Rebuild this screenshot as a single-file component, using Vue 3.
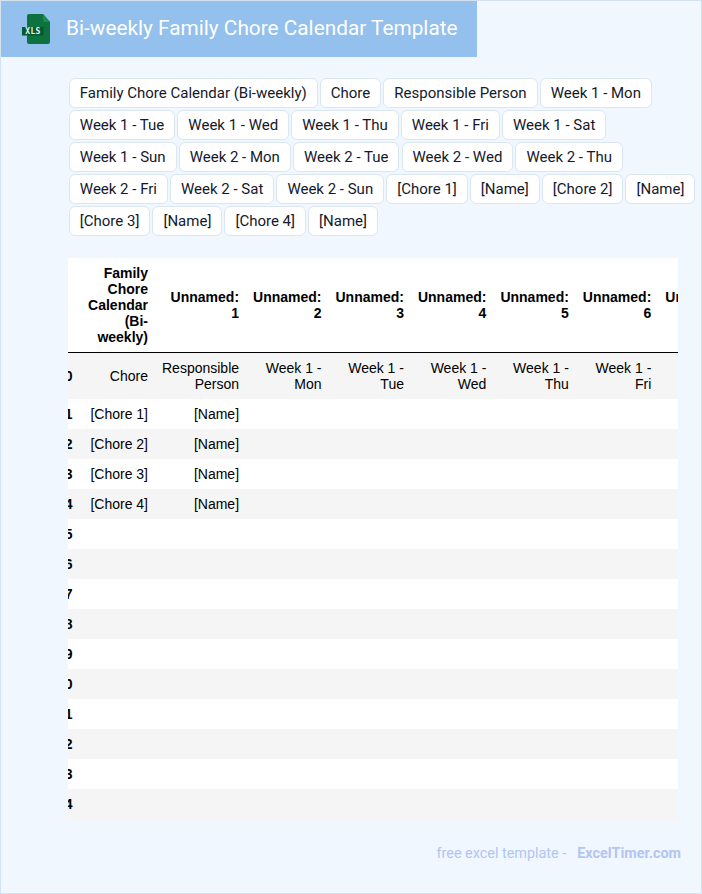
<script setup>
const chips = ['Family Chore Calendar (Bi-weekly)','Chore','Responsible Person','Week 1 - Mon','Week 1 - Tue','Week 1 - Wed','Week 1 - Thu','Week 1 - Fri','Week 1 - Sat','Week 1 - Sun','Week 2 - Mon','Week 2 - Tue','Week 2 - Wed','Week 2 - Thu','Week 2 - Fri','Week 2 - Sat','Week 2 - Sun','[Chore 1]','[Name]','[Chore 2]','[Name]','[Chore 3]','[Name]','[Chore 4]','[Name]']
const days = ['Mon','Tue','Wed','Thu','Fri','Sat','Sun']
const weeks = [...days.map(d => 'Week 1 - ' + d), ...days.map(d => 'Week 2 - ' + d)]
const heads = ['Family Chore Calendar (Bi-weekly)', ...Array.from({ length: 15 }, (_, i) => 'Unnamed: ' + (i + 1))]
const rows = [['Chore', 'Responsible Person', ...weeks]]
for (let i = 1; i <= 4; i++) rows.push(['[Chore ' + i + ']', '[Name]', ...weeks.map(() => '')])
for (let i = 5; i <= 14; i++) rows.push(heads.map(() => ''))
</script>

<template>
  <div class="page">
    <header class="banner">
      <svg class="logo" width="29" height="32" viewBox="0 0 29 32">
        <path d="M7 1h14l7 8v20a2 2 0 0 1-2 2H7a2 2 0 0 1-2-2V3a2 2 0 0 1 2-2z" fill="#0b7240" />
        <path d="M21 1l7 8h-5a2 2 0 0 1-2-2z" fill="#1d8a55" />
        <rect x="0" y="14" width="21.5" height="8.5" fill="#07592f" />
        <text x="11" y="21" text-anchor="middle" class="logo-text">XLS</text>
      </svg>
      <h1 class="title">Bi-weekly Family Chore Calendar Template</h1>
    </header>

    <div class="chips">
      <span v-for="(c, i) in chips" :key="i" class="chip">{{ c }}</span>
    </div>

    <div class="table-wrap">
      <table class="sheet">
        <thead>
          <tr>
            <th class="idx"></th>
            <th v-for="h in heads" :key="h">{{ h }}</th>
          </tr>
        </thead>
        <tbody>
          <tr v-for="(r, i) in rows" :key="i">
            <th class="idx">{{ i }}</th>
            <td v-for="(c, j) in r" :key="j">{{ c }}</td>
          </tr>
        </tbody>
      </table>
    </div>

    <footer class="foot">
      <span>free excel template -</span>
      <strong>ExcelTimer.com</strong>
    </footer>
  </div>
</template>

<style>
html, body { margin: 0; padding: 0; }
</style>

<style scoped>
.page {
  box-sizing: border-box;
  width: 702px;
  height: 894px;
  background: #f0f7ff;
  border: 1px solid #d5e2f0;
  overflow: hidden;
  font-family: Roboto, sans-serif;
  display: flex;
  flex-direction: column;
}
.banner {
  width: 476px;
  height: 56px;
  background: #93c0ec;
  display: flex;
  align-items: center;
  flex-shrink: 0;
}
.logo { margin-left: 21px; margin-right: 15px; flex-shrink: 0; }
.logo-text { font: bold 8px "DejaVu Sans Mono", monospace; letter-spacing: 0.4px; fill: #e8f5ee; }
.title {
  margin: 0 0 2px;
  font-size: 20.8px;
  font-weight: 400;
  color: #fff;
  white-space: nowrap;
}
.chips {
  margin: 21px 4px 0 67.8px;
  display: flex;
  flex-wrap: wrap;
  gap: 2px 2.05px;
}
.chip {
  box-sizing: border-box;
  height: 30px;
  line-height: 28px;
  padding: 0 10px;
  background: #fff;
  border: 1px solid #dbe6f3;
  border-radius: 6px;
  font-size: 15px;
  color: #14192b;
  white-space: nowrap;
}
.table-wrap {
  margin: 22px 23px 0 67px;
  overflow: hidden;
  background: #fff;
}
.sheet {
  border-collapse: collapse;
  margin-left: -18px;
  font: 14px/16px "Liberation Sans", Arial, sans-serif;
  color: #000;
}
.sheet th, .sheet td {
  padding: 7px;
  text-align: right;
  vertical-align: middle;
}
.sheet th { font-weight: 700; }
.sheet .idx { padding-right: 8.5px; }
.sheet thead tr { border-bottom: 1px solid #000; }
.sheet tbody tr:nth-child(odd) { background: #f5f5f5; }
.sheet tbody tr:nth-child(even) { background: #fff; }
.sheet tbody tr:not(:nth-child(1)) th,
.sheet tbody tr:not(:nth-child(1)) td { height: 16px; }
.foot {
  margin: 26px 20px 0 0;
  display: flex;
  justify-content: flex-end;
  gap: 11px;
  font-size: 14.4px;
  color: #b3c5f2;
}
.foot strong { font-weight: 700; }
</style>
